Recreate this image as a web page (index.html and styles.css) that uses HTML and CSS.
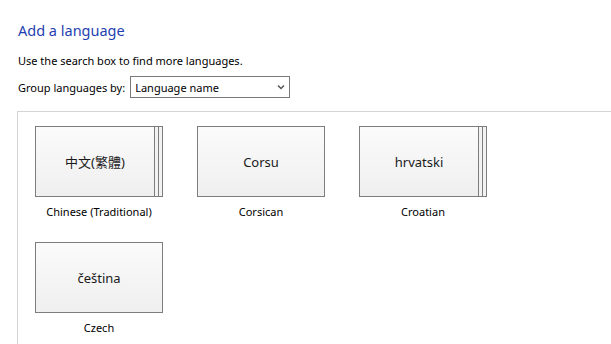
FILE: index.html
```html
<!DOCTYPE html>
<html lang="en">

<head>
  <meta charset="UTF-8">
  <title>Add a language</title>
  <link rel="stylesheet" href="styles.css">
</head>

<body>
  <div class="header">
    <h1>Add a language</h1>
    <p class="hint">Use the search box to find more languages.</p>
    <div class="group-row">
      <label for="group-by">Group languages by:</label>
      <div class="select">
        <span>Language name</span>
        <svg width="8" height="6" viewBox="0 0 8 6"><path d="M1 1.5 L4 4.5 L7 1.5" fill="none" stroke="#555" stroke-width="1.5"/></svg>
      </div>
    </div>
  </div>

  <!-- Language tiles -->
  <div class="panel">
    <div class="tiles">
      <div class="item">
        <div class="tile stacked">中文(繁體)</div>
        <div class="name">Chinese (Traditional)</div>
      </div>
      <div class="item">
        <div class="tile">Corsu</div>
        <div class="name">Corsican</div>
      </div>
      <div class="item">
        <div class="tile stacked">hrvatski</div>
        <div class="name">Croatian</div>
      </div>
      <div class="item">
        <div class="tile">čeština</div>
        <div class="name">Czech</div>
      </div>
    </div>
  </div>
</body>

</html>
```

FILE: styles.css
```css
body {
  margin: 0;
  font-family: "Noto Sans", "Noto Sans CJK TC", sans-serif;
  font-size: 11px;
  color: #000;
  background: #fff;
  height: 344px;
  overflow: hidden;
  display: flex;
  flex-direction: column;
}

.header {
  padding: 19px 0 0 18px;
}

h1 {
  margin: 0;
  font-size: 14.5px;
  font-weight: normal;
  line-height: 22px;
  color: #1f3fb0;
}

.hint {
  margin: 12px 0 0;
  line-height: 16px;
}

.group-row {
  display: flex;
  align-items: center;
  gap: 5px;
  margin-top: 7px;
}

.select {
  width: 160px;
  height: 22px;
  box-sizing: border-box;
  border: 1px solid #7a7a7a;
  display: flex;
  align-items: center;
  justify-content: space-between;
  padding: 0 4px 0 4px;
}

.panel {
  flex: 1;
  margin: 13px 0 0 17px;
  border-top: 1px solid #d4d4d4;
  border-left: 1px solid #d4d4d4;
}

.tiles {
  display: grid;
  grid-template-columns: repeat(3, 128px);
  column-gap: 34px;
  row-gap: 22px;
  padding: 14px 0 0 17px;
}

.item {
  display: flex;
  flex-direction: column;
  align-items: center;
}

.tile {
  position: relative;
  width: 128px;
  height: 71px;
  box-sizing: border-box;
  border: 1px solid #7d7d7d;
  background: linear-gradient(#fbfbfb, #efefef);
  display: flex;
  align-items: center;
  justify-content: center;
  font-size: 13px;
  color: #1a1a1a;
}

.tile.stacked {
  width: 120px;
  margin-right: 8px;
}

/* stacked pages behind the tile */
.tile.stacked::before,
.tile.stacked::after {
  content: "";
  position: absolute;
  top: -1px;
  bottom: -1px;
  border: 1px solid #7d7d7d;
  background: #f2f2f2;
}

.tile.stacked::before {
  left: 3px;
  right: -5px;
  z-index: -1;
}

.tile.stacked::after {
  left: 7px;
  right: -9px;
  z-index: -2;
}

.name {
  margin-top: 7px;
  line-height: 16px;
}
```
